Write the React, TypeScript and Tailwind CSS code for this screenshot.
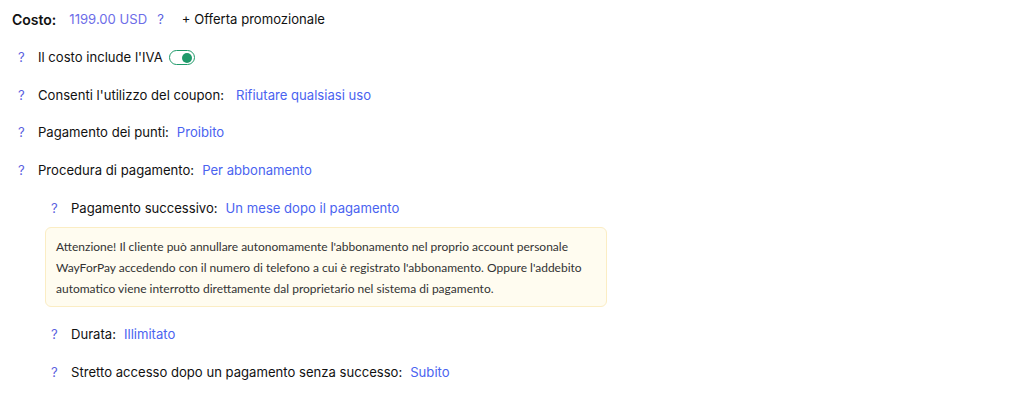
import React from "react";

const Q = () => <span className="text-[#5b5fe0] w-[6px] inline-block">?</span>;

function Row({ label, value, indent = false, extra = "" }: { label: string; value: string; indent?: boolean; extra?: string }) {
  return (
    <div className={`flex items-center h-[37.8px] ${indent ? "pl-[51px]" : "pl-[18px]"}`}>
      <Q />
      <span className="ml-[14px] text-[#111]">{label}</span>
      <span className={`text-[#4a63f0] ${extra || "ml-[8px]"}`}>{value}</span>
    </div>
  );
}

export default function App() {
  return (
    <div className="w-[1017px] h-[394px] bg-white text-[13.1px] overflow-hidden pt-[1px]" style={{ fontFamily: "Inter, 'Noto Sans', sans-serif" }}>
      <div className="flex items-center h-[37.8px] pl-[12px]">
        <span className="font-semibold text-[14px] text-[#111]">Costo:</span>
        <span className="ml-[13px] text-[#6d6de8]">1199.00 USD</span>
        <span className="ml-[10px] text-[#5b5fe0]">?</span>
        <span className="ml-[18px] text-[#111]">+ Offerta promozionale</span>
      </div>
      <div className="flex items-center h-[37.8px] pl-[18px]">
        <Q />
        <span className="ml-[14px] text-[#111]">Il costo include l'IVA</span>
        <span className="ml-[6px] w-[26px] h-[15px] rounded-full border-[1.5px] border-[#1f9a6a] flex items-center justify-end pr-[2px]">
          <span className="w-[10px] h-[10px] rounded-full bg-[#1f9a6a]" />
        </span>
      </div>
      <Row label="Consenti l'utilizzo del coupon:" value="Rifiutare qualsiasi uso" extra="ml-[12px]" />
      <Row label="Pagamento dei punti:" value="Proibito" />
      <Row label="Procedura di pagamento:" value="Per abbonamento" />
      <Row label="Pagamento successivo:" value="Un mese dopo il pagamento" indent />
      <div className="-mt-[1px] ml-[45px] w-[562px] rounded-[6px] border border-[#fbedc4] bg-[#fffcf0] px-[10px] pt-[8px] pb-[7px] text-[12px] leading-[21px] text-[#333]" style={{ fontFamily: "Lato, sans-serif" }}>
        Attenzione! Il cliente può annullare autonomamente l'abbonamento nel proprio account personale WayForPay accedendo con il numero di telefono a cui è registrato l'abbonamento. Oppure l'addebito automatico viene interrotto direttamente dal proprietario nel sistema di pagamento.
      </div>
      <div className="h-[9px]" />
      <Row label="Durata:" value="Illimitato" indent />
      <Row label="Stretto accesso dopo un pagamento senza successo:" value="Subito" indent />
    </div>
  );
}
